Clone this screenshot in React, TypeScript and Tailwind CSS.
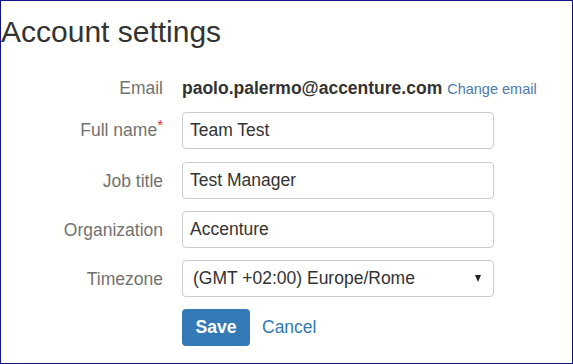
import { useState } from "react";

const labelClass =
  "w-[162px] shrink-0 text-right text-[17.5px] text-[#727272] leading-[20px]";
const inputClass =
  "w-[312px] h-[37px] rounded-[4px] border border-[#cccccc] bg-white px-[7px] text-[17.5px] text-[#333333] outline-none";

export default function App() {
  const [fullName, setFullName] = useState("Team Test");
  const [jobTitle, setJobTitle] = useState("Test Manager");
  const [organization, setOrganization] = useState("Accenture");
  const [timezone, setTimezone] = useState("Europe/Rome");

  return (
    <div
      className="w-[573px] h-[364px] bg-[#fffffd] border border-[#14148a] overflow-hidden"
      style={{ fontFamily: '"Liberation Sans", Arial, sans-serif' }}
    >
      {/* Header */}
      <h1 className="pt-[14px] text-[30px] leading-[33px] text-[#333333]">
        Account settings
      </h1>

      <div className="mt-[27px] flex flex-col">
        {/* Email */}
        <div className="flex items-center h-[26px] gap-[19px]">
          <label className={labelClass}>Email</label>
          <div className="flex items-baseline gap-[5px] whitespace-nowrap">
            <span className="text-[17.5px] font-bold text-[#333333]">
              paolo.palermo@accenture.com
            </span>
            <a href="#" className="text-[14.5px] text-[#4a7ab0]">
              Change email
            </a>
          </div>
        </div>

        {/* Full name */}
        <div className="mt-[11px] flex items-center gap-[19px]">
          <label className={labelClass}>
            Full name
            <span className="relative -top-[6px] text-[15px] text-[#d9302c]">
              *
            </span>
          </label>
          <input
            className={inputClass}
            value={fullName}
            onChange={(e) => setFullName(e.target.value)}
          />
        </div>

        {/* Job title */}
        <div className="mt-[13px] flex items-center gap-[19px]">
          <label className={labelClass}>Job title</label>
          <input
            className={inputClass}
            value={jobTitle}
            onChange={(e) => setJobTitle(e.target.value)}
          />
        </div>

        {/* Organization */}
        <div className="mt-[12px] flex items-center gap-[19px]">
          <label className={labelClass}>Organization</label>
          <input
            className={inputClass}
            value={organization}
            onChange={(e) => setOrganization(e.target.value)}
          />
        </div>

        {/* Timezone */}
        <div className="mt-[12px] flex items-center gap-[19px]">
          <label className={labelClass}>Timezone</label>
          <div className="relative">
            <select
              className={inputClass + " appearance-none pl-[10px]"}
              value={timezone}
              onChange={(e) => setTimezone(e.target.value)}
            >
              <option value="Europe/Rome">(GMT +02:00) Europe/Rome</option>
            </select>
            <span className="pointer-events-none absolute right-[13px] top-[15px] h-0 w-0 border-x-[3.5px] border-t-[7px] border-x-transparent border-t-[#222222]" />
          </div>
        </div>

        {/* Actions */}
        <div className="mt-[12px] flex items-center gap-[19px]">
          <div className="w-[162px] shrink-0" />
          <div className="flex items-center gap-[12px]">
            <button className="h-[37px] w-[68px] rounded-[4px] bg-[#337ab7] text-[17.5px] font-bold text-white">
              Save
            </button>
            <a href="#" className="text-[17.5px] text-[#337ab7]">
              Cancel
            </a>
          </div>
        </div>
      </div>
    </div>
  );
}
